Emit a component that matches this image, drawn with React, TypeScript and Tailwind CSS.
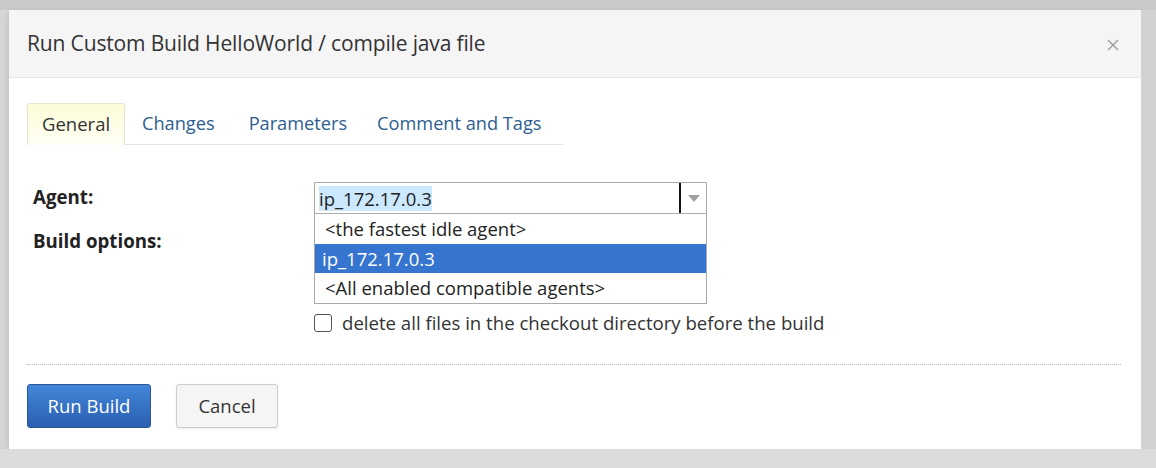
import React from "react";

const font = { fontFamily: '"Open Sans", "Noto Sans", sans-serif' };

export default function App() {
  return (
    <div className="w-[1156px] h-[468px] overflow-hidden bg-[#d9d9d9] flex flex-col" style={font}>
      <div className="h-[10px] bg-[#c9cacc] shrink-0" />
      <div className="flex">
        <div className="w-[9px] bg-[#d6d6d6]" />
        <div className="w-[1132px] h-[439px] bg-white flex flex-col shadow-[0_2px_6px_rgba(0,0,0,0.15)]">
          {/* header */}
          <div className="h-[68px] bg-[#f5f5f5] border-b border-[#e6e6e6] flex items-center justify-between pl-[18px] pr-[22px]">
            <div className="text-[21px] text-[#333] tracking-[-0.15px]">Run Custom Build HelloWorld / compile java file</div>
            <svg width="12" height="12" viewBox="0 0 12 12" className="mt-[2px]">
              <path d="M1 1 L11 11 M11 1 L1 11" stroke="#9a9a9a" strokeWidth="1.4" />
            </svg>
          </div>
          {/* body */}
          <div className="pl-[18px] pr-[20px] pt-[25px]">
            {/* tabs */}
            <div className="flex w-[536px] border-b border-[#e3e3e3] h-[42px] items-end">
              <div className="w-[98px] h-[42px] pl-[14px] flex items-center rounded-t-[3px] border border-b-0 border-[#e6e6cf] bg-gradient-to-b from-[#fcfcd9] to-[#fffff4] text-[18.5px] text-[#333] -mb-px pb-px">
                General
              </div>
              <div className="h-[42px] flex items-center text-[18.2px] text-[#2d5d8f] ml-[17px] pt-[2px]">Changes</div>
              <div className="h-[42px] flex items-center text-[18.2px] text-[#2d5d8f] ml-[34px] pt-[2px]">Parameters</div>
              <div className="h-[42px] flex items-center text-[18.2px] text-[#2d5d8f] ml-[30px] pt-[2px]">Comment and Tags</div>
            </div>
            {/* form */}
            <div className="flex mt-[37px]">
              <div className="w-[287px] pl-[6px] flex flex-col">
                <div className="h-[30px] flex items-center text-[18.7px] font-bold text-[#222]">Agent:</div>
                <div className="h-[30px] mt-[14px] flex items-center text-[18.7px] font-bold text-[#222]">Build options:</div>
              </div>
              <div className="flex flex-col">
                <div className="w-[393px] border border-[#aaa]">
                  <div className="h-[30px] flex">
                    <div className="w-[366px] border-r-2 border-[#111] flex items-center pl-[4px]">
                      <span className="bg-[#cce8ff] text-[18.5px] text-[#222] leading-[25px]">ip_172.17.0.3</span>
                    </div>
                    <div className="flex-1 flex items-center justify-center">
                      <svg width="12" height="7" viewBox="0 0 12 7">
                        <path d="M0 0 L12 0 L6 7 Z" fill="#a0a0a0" />
                      </svg>
                    </div>
                  </div>
                  <div className="border-t border-[#aaa]">
                    <div className="h-[30px] flex items-center pl-[10px] text-[18.5px] text-[#222]">&lt;the fastest idle agent&gt;</div>
                    <div className="h-[29px] flex items-center pl-[7px] text-[18.5px] text-white bg-[#3574cf]">ip_172.17.0.3</div>
                    <div className="h-[30px] flex items-center pl-[10px] text-[18.5px] text-[#222]">&lt;All enabled compatible agents&gt;</div>
                  </div>
                </div>
                <div className="flex items-center mt-[8px] h-[22px]">
                  <div className="w-[18px] h-[18px] rounded-[3px] border border-[#555] bg-white" />
                  <span className="ml-[10px] text-[18.6px] text-[#333]">delete all files in the checkout directory before the build</span>
                </div>
              </div>
            </div>
            {/* separator */}
            <div className="mt-[30px] border-t border-dotted border-[#b5b5b5] w-[1094px]" />
            {/* buttons */}
            <div className="flex mt-[19px] gap-[25px]">
              <button className="w-[124px] h-[44px] rounded-[3px] border border-[#2a5596] bg-gradient-to-b from-[#4287d8] to-[#2b5fb1] text-white text-[18.5px]">
                Run Build
              </button>
              <button className="w-[102px] h-[44px] rounded-[3px] border border-[#cccccc] bg-[#f5f5f5] text-[#333] text-[18.5px] shadow-[0_1px_2px_rgba(0,0,0,0.08)]">
                Cancel
              </button>
            </div>
          </div>
        </div>
        <div className="flex-1 bg-[#d2d2d2]" />
      </div>
      <div className="flex-1 bg-[#dcdcdc]" />
    </div>
  );
}
